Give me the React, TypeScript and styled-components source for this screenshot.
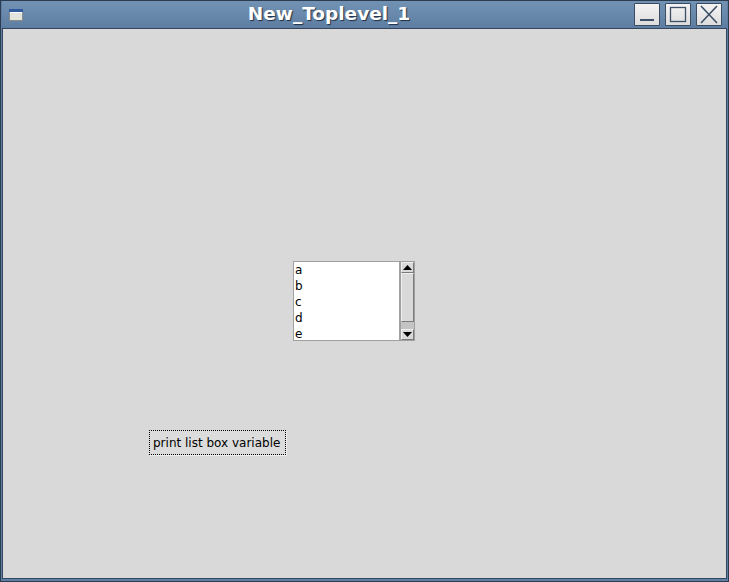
import React from "react";
import styled, { createGlobalStyle } from "styled-components";

const Global = createGlobalStyle`
  html, body { margin: 0; padding: 0; background: #d9d9d9; }
  body { font-family: "DejaVu Sans", "Liberation Sans", sans-serif; }
  * { box-sizing: border-box; }
`;

const Window = styled.div`
  width: 729px;
  height: 582px;
  border: 1px solid #2c3c50;
  background: #5e7fa3;
  display: flex;
  flex-direction: column;
  padding: 0 1px 2px 1px;
`;

const TitleBar = styled.div`
  height: 27px;
  flex: none;
  display: flex;
  align-items: flex-start;
  background: linear-gradient(#7292b4 0%, #6a8aad 45%, #5c7da1 100%);
`;

const IconSlot = styled.div`
  width: 26px;
  flex: none;
  padding: 8px 0 0 7px;
  svg { display: block; }
`;

const Title = styled.div`
  flex: 1;
  text-align: center;
  color: #ffffff;
  font-family: "DejaVu Sans", sans-serif;
  font-weight: bold;
  font-size: 18.5px;
  line-height: 26px;
  text-shadow: 1px 1px 1px #1f2f45;
  padding-right: 4px;
`;

const Controls = styled.div`
  display: flex;
  gap: 5px;
  padding: 2px 5px 0 0;
  flex: none;
`;

const CtrlButton = styled.div`
  width: 26px;
  height: 23px;
  border: 1px solid #3a4c62;
  border-radius: 1px;
  background: linear-gradient(#f4f4f4, #dcdcdc);
  display: flex;
  align-items: center;
  justify-content: center;
  svg { display: block; }
`;

const Body = styled.div`
  flex: 1;
  border: 1px solid #34475d;
  background: #d9d9d9;
  display: flex;
  flex-direction: column;
  align-items: flex-start;
  padding-top: 232px;
`;

const ListRow = styled.div`
  display: flex;
  margin-left: 290px;
  height: 80px;
`;

const ListBox = styled.div`
  width: 107px;
  height: 80px;
  background: #ffffff;
  border: 1px solid #a0a0a0;
  overflow: hidden;
  padding-left: 1px;
`;

const ListItem = styled.div`
  font-family: "DejaVu Sans", sans-serif;
  font-size: 12px;
  line-height: 16px;
  color: #000;
  white-space: nowrap;
`;

const ScrollBar = styled.div`
  width: 15px;
  height: 80px;
  border: 1px solid #a0a0a0;
  background: #c3c3c3;
  display: flex;
  flex-direction: column;
`;

const Arrow = styled.div`
  height: 11px;
  flex: none;
  background: #d9d9d9;
  border: 1px solid #888;
  border-color: #f0f0f0 #7a7a7a #7a7a7a #f0f0f0;
  display: flex;
  align-items: center;
  justify-content: center;
  svg { display: block; }
`;

const Slider = styled.div`
  height: 49px;
  flex: none;
  background: #d9d9d9;
  border: 1px solid #888;
  border-color: #f0f0f0 #7a7a7a #7a7a7a #f0f0f0;
`;

const Trough = styled.div`
  flex: 1;
`;

const ActionButton = styled.button`
  margin: 89px 0 0 146px;
  width: 137px;
  height: 25px;
  padding: 0 0 0 3px;
  text-align: left;
  border: 1px dotted #000;
  background: #dcdcdc;
  font-family: "DejaVu Sans", sans-serif;
  font-size: 12px;
  color: #000;
  box-shadow: 1px 1px 0 #eeeeee;
`;

const items = ["a", "b", "c", "d", "e"];

export default function App() {
  return (
    <>
      <Global />
      <Window>
        <TitleBar>
          <IconSlot>
            <svg width="14" height="12" viewBox="0 0 14 12">
              <rect x="0.5" y="0.5" width="13" height="11" fill="#e4e4df" stroke="#8a8a86" />
              <rect x="0" y="0" width="14" height="3" fill="#2f5a9c" />
              <rect x="1" y="3" width="12" height="1" fill="#ffffff" />
            </svg>
          </IconSlot>
          <Title>New_Toplevel_1</Title>
          <Controls>
            <CtrlButton>
              <svg width="20" height="17" viewBox="0 0 20 17">
                <rect x="3" y="13" width="14" height="2" fill="#3d5068" />
              </svg>
            </CtrlButton>
            <CtrlButton>
              <svg width="20" height="17" viewBox="0 0 20 17">
                <rect x="2.5" y="1.5" width="15" height="14" fill="none" stroke="#3d5068" strokeWidth="1.3" />
              </svg>
            </CtrlButton>
            <CtrlButton>
              <svg width="20" height="19" viewBox="0 0 20 19">
                <path d="M2 1 L18 18 M18 1 L2 18" stroke="#3d5068" strokeWidth="1.6" />
              </svg>
            </CtrlButton>
          </Controls>
        </TitleBar>
        <Body>
          <ListRow>
            <ListBox>
              {items.map((i) => (
                <ListItem key={i}>{i}</ListItem>
              ))}
            </ListBox>
            <ScrollBar>
              <Arrow>
                <svg width="9" height="5" viewBox="0 0 9 5">
                  <path d="M0 5 L4.5 0 L9 5 Z" fill="#000" />
                </svg>
              </Arrow>
              <Slider />
              <Trough />
              <Arrow>
                <svg width="9" height="5" viewBox="0 0 9 5">
                  <path d="M0 0 L4.5 5 L9 0 Z" fill="#000" />
                </svg>
              </Arrow>
            </ScrollBar>
          </ListRow>
          <ActionButton>print list box variable</ActionButton>
        </Body>
      </Window>
    </>
  );
}
